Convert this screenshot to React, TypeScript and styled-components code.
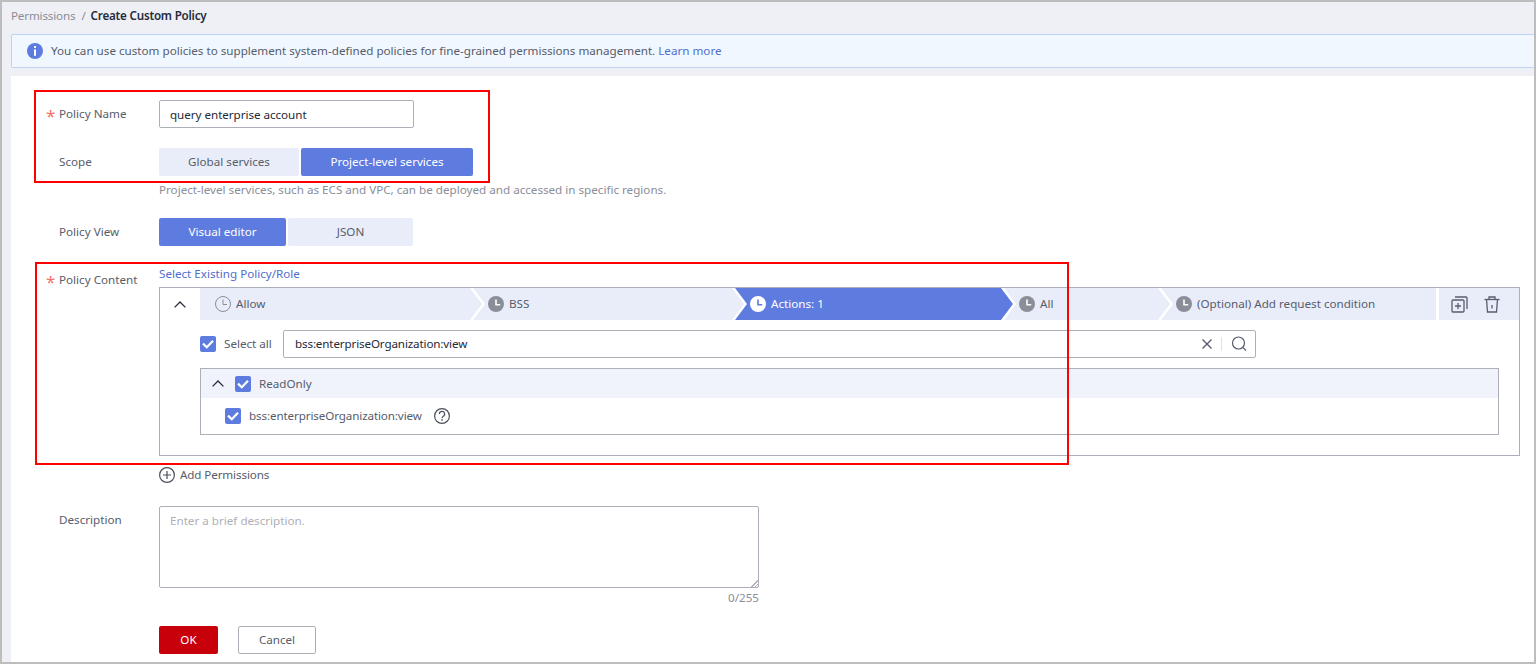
import React from 'react';
import styled, { createGlobalStyle } from 'styled-components';

const Global = createGlobalStyle`
  html, body { margin: 0; padding: 0; height: 100%; overflow: hidden; }
  body { font-family: "Noto Sans", "Open Sans", sans-serif; font-size: 11.65px; line-height: 16px; color: #575d6c; }
`;

const Frame = styled.div`
  position: relative;
  box-sizing: border-box;
  width: 1536px;
  height: 664px;
  border: 2px solid #bdbdbd;
  background: #eff0f5;
  display: flex;
  flex-direction: column;
  overflow: hidden;
`;

const Breadcrumb = styled.div`
  height: 28px;
  padding: 0 0 4px 9px;
  display: flex;
  align-items: center;
  gap: 6px;
  flex: none;
  color: #8a8e99;
  letter-spacing: -0.17px;
  b { font-weight: 600; color: #252b3a; letter-spacing: -0.22px; margin-left: -1px; }
`;

const Notice = styled.div`
  flex: none;
  box-sizing: border-box;
  height: 34px;
  margin-left: 9px;
  margin-right: -2px;
  display: flex;
  align-items: center;
  gap: 8px;
  padding-left: 15px;
  background: #f0f7ff;
  border: 1px solid #bed3f3;
  border-radius: 2px;
  a { color: #526ecc; }
`;

const Card = styled.div`
  flex: 1;
  margin: 8px 0 0 9px;
  padding: 24px 14px 0 0;
  background: #fff;
`;

const Row = styled.div<{ $mt?: number }>`
  display: grid;
  grid-template-columns: 148px 1fr;
  margin-top: ${p => p.$mt ?? 0}px;
`;

const Label = styled.div<{ $pt?: number }>`
  position: relative;
  padding-left: 48px;
  padding-top: ${p => p.$pt ?? 5}px;
  line-height: 18px;
`;

const Star = styled.span<{ $top?: number }>`
  position: absolute;
  left: 35px;
  top: ${p => p.$top ?? 7}px;
  font-size: 17px;
  line-height: 18px;
  color: #f66f6a;
`;

const TextInput = styled.input`
  box-sizing: border-box;
  display: block;
  width: 255px;
  height: 28px;
  padding: 0 10px;
  border: 1px solid #adb0b8;
  border-radius: 2px;
  font: inherit;
  color: #252b3a;
  letter-spacing: -0.04px;
  outline: none;
`;

const Toggle = styled.div`
  display: flex;
  gap: 2px;
`;

const ToggleButton = styled.div<{ $w: number; $on?: boolean }>`
  width: ${p => p.$w}px;
  height: 28px;
  line-height: 28px;
  text-align: center;
  border-radius: 2px;
  background: ${p => (p.$on ? '#5e7ce0' : '#e9edfa')};
  color: ${p => (p.$on ? '#fff' : '#575d6c')};
`;

const Hint = styled.div`
  margin: 5px 0 0 148px;
  line-height: 18px;
  color: #8a8e99;
`;

const LinkText = styled.div`
  line-height: 18px;
  color: #526ecc;
`;

const Box = styled.div`
  margin-top: 4px;
  border: 1px solid #adb0b8;
`;

const BoxHead = styled.div`
  display: flex;
  height: 32px;
`;

const Collapse = styled.div`
  width: 40px;
  flex: none;
  display: flex;
  align-items: center;
  justify-content: center;
`;

const Steps = styled.div`
  flex: 1;
  display: flex;
`;

const Step = styled.div<{ $w?: number; $on?: boolean; $first?: boolean; $last?: boolean }>`
  flex: ${p => (p.$last ? '1' : 'none')};
  width: ${p => (p.$w ? `${p.$w}px` : 'auto')};
  margin-left: ${p => (p.$first ? 0 : -9)}px;
  box-sizing: border-box;
  padding-left: 15px;
  display: flex;
  align-items: center;
  gap: 5px;
  background: ${p => (p.$on ? '#5e7ce0' : '#e9edfa')};
  color: ${p => (p.$on ? '#fff' : '#575d6c')};
  clip-path: polygon(
    0 0,
    ${p => (p.$last ? '100%' : 'calc(100% - 12px)')} 0,
    100% 50%,
    ${p => (p.$last ? '100%' : 'calc(100% - 12px)')} 100%,
    0 100%,
    ${p => (p.$first ? '0' : '12px')} 50%
  );
  svg { flex: none; }
`;

const Tools = styled.div`
  width: 80px;
  flex: none;
  margin-left: 3px;
  background: #e9edfa;
  display: flex;
  align-items: center;
  gap: 16px;
  padding-left: 12px;
  box-sizing: border-box;
`;

const BoxBody = styled.div`
  padding: 10px 20px 20px 40px;
`;

const SelectRow = styled.div`
  display: flex;
  align-items: center;
  gap: 8px;
`;

const CheckLabel = styled.span`
  width: 51px;
  color: #575d6c;
`;

const SearchBox = styled.div`
  box-sizing: border-box;
  width: 973px;
  height: 28px;
  padding: 0 8px 0 11px;
  border: 1px solid #adb0b8;
  border-radius: 2px;
  display: flex;
  align-items: center;
  color: #252b3a;
  letter-spacing: -0.14px;
  span { flex: 1; }
`;

const Divider = styled.i`
  width: 1px;
  height: 14px;
  margin: 0 9px 0 8px;
  background: #dfe1e6;
`;

const Group = styled.div`
  margin-top: 10px;
  border: 1px solid #adb0b8;
`;

const GroupHead = styled.div`
  height: 29px;
  padding-left: 11px;
  display: flex;
  align-items: center;
  gap: 8px;
  background: #f0f3fc;
  svg:first-child { margin-right: 3px; }
  span { padding-top: 1px; }
`;

const GroupItem = styled.div`
  height: 36px;
  padding-left: 24px;
  display: flex;
  align-items: center;
  gap: 8px;
  color: #575d6c;
  letter-spacing: -0.12px;
  svg:last-child { margin-left: 4px; }
`;

const AddRow = styled.div`
  margin-top: 9px;
  height: 20px;
  display: flex;
  align-items: center;
  gap: 5px;
  color: #575d6c;
  letter-spacing: -0.12px;
`;

const DescArea = styled.textarea`
  box-sizing: border-box;
  display: block;
  width: 600px;
  height: 82px;
  padding: 5px 10px;
  border: 1px solid #adb0b8;
  border-radius: 2px;
  font: inherit;
  line-height: 18px;
  color: #252b3a;
  outline: none;
  resize: vertical;
  &::placeholder { color: #adb0b8; }
  &::-webkit-resizer {
    background: linear-gradient(135deg, transparent 76%, #adb0b8 76%, #adb0b8 81%, transparent 81%, transparent 88%, #adb0b8 88%, #adb0b8 93%, transparent 93%);
  }
`;

const Counter = styled.div`
  width: 600px;
  margin-top: 1px;
  line-height: 18px;
  text-align: right;
  color: #8a8e99;
`;

const Actions = styled.div`
  margin: 19px 0 0 148px;
  display: flex;
  gap: 20px;
`;

const OkButton = styled.div`
  width: 59px;
  height: 28px;
  line-height: 28px;
  text-align: center;
  border-radius: 2px;
  background: #c7000b;
  color: #fff;
`;

const CancelButton = styled.div`
  box-sizing: border-box;
  width: 78px;
  height: 28px;
  line-height: 26px;
  text-align: center;
  border: 1px solid #adb0b8;
  border-radius: 2px;
  color: #575d6c;
`;

const Callout = styled.div<{ $x: number; $y: number; $w: number; $h: number }>`
  position: absolute;
  left: ${p => p.$x - 2}px;
  top: ${p => p.$y - 2}px;
  width: ${p => p.$w}px;
  height: ${p => p.$h}px;
  box-sizing: border-box;
  border: 2px solid #f00;
  pointer-events: none;
`;

function Clock({ hollow, light }: { hollow?: boolean; light?: boolean }) {
  if (hollow) {
    return (
      <svg width="16" height="16" viewBox="0 0 16 16" fill="none" stroke="#8a8e99" strokeWidth="1">
        <circle cx="8" cy="8" r="7.5" />
        <path d="M8 3.5V8.5H12" />
      </svg>
    );
  }
  return (
    <svg width="16" height="16" viewBox="0 0 16 16" fill="none">
      <circle cx="8" cy="8" r="8" fill={light ? '#fff' : '#8a8e99'} />
      <path d="M8 3.5V8.8H12.2" stroke={light ? '#5e7ce0' : '#fff'} strokeWidth="1.6" />
    </svg>
  );
}

function Check() {
  return (
    <svg width="16" height="16" viewBox="0 0 16 16">
      <rect width="16" height="16" rx="2" fill="#5e7ce0" />
      <path d="M3 7.6L6.8 11.2L13 4.8" fill="none" stroke="#fff" strokeWidth="2.2" />
    </svg>
  );
}

function Chevron() {
  return (
    <svg width="12" height="7" viewBox="0 0 12 7" fill="none" stroke="#252b3a" strokeWidth="1.3">
      <path d="M0.6 6.4L6 1L11.4 6.4" />
    </svg>
  );
}

export default function App() {
  return (
    <Frame>
      <Global />
      <Breadcrumb>
        <span>Permissions</span>
        <span>/</span>
        <b>Create Custom Policy</b>
      </Breadcrumb>
      <Notice>
        <svg width="16" height="16" viewBox="0 0 16 16">
          <circle cx="8" cy="8" r="8" fill="#5e7ce0" />
          <rect x="7" y="3" width="2" height="2" fill="#fff" />
          <rect x="7" y="6.4" width="2" height="6.4" fill="#fff" />
        </svg>
        <span>
          You can use custom policies to supplement system-defined policies for fine-grained permissions management.{' '}
          <a>Learn more</a>
        </span>
      </Notice>
      <Card>
        <Row>
          <Label><Star>*</Star>Policy Name</Label>
          <TextInput readOnly value="query enterprise account" />
        </Row>
        <Row $mt={20}>
          <Label>Scope</Label>
          <Toggle>
            <ToggleButton $w={140}>Global services</ToggleButton>
            <ToggleButton $w={172} $on>Project-level services</ToggleButton>
          </Toggle>
        </Row>
        <Hint>Project-level services, such as ECS and VPC, can be deployed and accessed in specific regions.</Hint>
        <Row $mt={19}>
          <Label>Policy View</Label>
          <Toggle>
            <ToggleButton $w={127} $on>Visual editor</ToggleButton>
            <ToggleButton $w={125}>JSON</ToggleButton>
          </Toggle>
        </Row>
        <Row $mt={19}>
          <Label $pt={6}><Star $top={8}>*</Star>Policy Content</Label>
          <div>
            <LinkText>Select Existing Policy/Role</LinkText>
            <Box>
              <BoxHead>
                <Collapse><Chevron /></Collapse>
                <Steps>
                  <Step $first $w={282}><Clock hollow />Allow</Step>
                  <Step $w={271}><Clock />BSS</Step>
                  <Step $w={278} $on><Clock light />Actions: 1</Step>
                  <Step $w={166}><Clock />All</Step>
                  <Step $last><Clock />(Optional) Add request condition</Step>
                </Steps>
                <Tools>
                  <svg width="17" height="17" viewBox="0 0 17 17" fill="none" stroke="#575d6c" strokeWidth="1.3">
                    <rect x="1" y="4" width="12" height="12" rx="1" />
                    <path d="M4 1H15a1 1 0 0 1 1 1V13" />
                    <path d="M7 7V13M4 10H10" />
                  </svg>
                  <svg width="16" height="17" viewBox="0 0 16 17" fill="none" stroke="#575d6c" strokeWidth="1.3">
                    <path d="M0.5 3.5H15.5" />
                    <path d="M5 3.5V1H11V3.5" />
                    <path d="M2.5 3.5L3.5 16H12.5L13.5 3.5" />
                    <path d="M8 9V12.5" />
                  </svg>
                </Tools>
              </BoxHead>
              <BoxBody>
                <SelectRow>
                  <Check />
                  <CheckLabel>Select all</CheckLabel>
                  <SearchBox>
                    <span>bss:enterpriseOrganization:view</span>
                    <svg width="12" height="12" viewBox="0 0 12 12" fill="none" stroke="#575d6c" strokeWidth="1.4">
                      <path d="M1.5 1.5L10.5 10.5M10.5 1.5L1.5 10.5" />
                    </svg>
                    <Divider />
                    <svg width="16" height="16" viewBox="0 0 16 16" fill="none" stroke="#575d6c" strokeWidth="1.2">
                      <circle cx="7.5" cy="7" r="6" />
                      <path d="M11.8 11.3L15 14.5" />
                    </svg>
                  </SearchBox>
                </SelectRow>
                <Group>
                  <GroupHead>
                    <Chevron />
                    <Check />
                    <span>ReadOnly</span>
                  </GroupHead>
                  <GroupItem>
                    <Check />
                    <span>bss:enterpriseOrganization:view</span>
                    <svg width="16" height="16" viewBox="0 0 16 16" fill="none" stroke="#4a4f5c" strokeWidth="1.2">
                      <circle cx="8" cy="8" r="7.4" />
                      <path d="M5.4 6a2.6 2.6 0 1 1 3.9 2.2C8.4 8.8 8 9.2 8 10.2" />
                      <path d="M8 11.2V12.8" strokeWidth="1.4" />
                    </svg>
                  </GroupItem>
                </Group>
              </BoxBody>
            </Box>
            <AddRow>
              <svg width="16" height="16" viewBox="0 0 16 16" fill="none" stroke="#4a4f5c" strokeWidth="1.2">
                <circle cx="8" cy="8" r="7.4" />
                <path d="M8 4V12M4 8H12" />
              </svg>
              Add Permissions
            </AddRow>
          </div>
        </Row>
        <Row $mt={21}>
          <Label>Description</Label>
          <div>
            <DescArea readOnly placeholder="Enter a brief description." />
            <Counter>0/255</Counter>
          </div>
        </Row>
        <Actions>
          <OkButton>OK</OkButton>
          <CancelButton>Cancel</CancelButton>
        </Actions>
      </Card>
      <Callout $x={34} $y={90} $w={456} $h={93} />
      <Callout $x={35} $y={262} $w={1034} $h={203} />
    </Frame>
  );
}
